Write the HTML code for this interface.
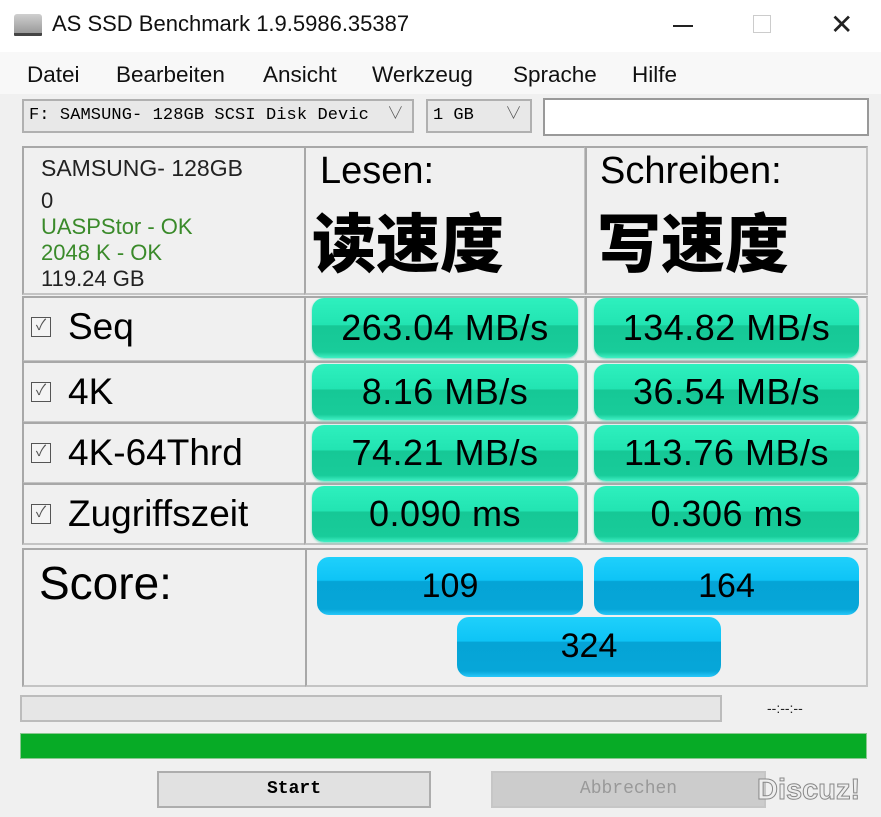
<!DOCTYPE html>
<html><head><meta charset="utf-8"><style>
*{box-sizing:border-box;margin:0;padding:0}
body{width:881px;height:817px;background:#f0f0f0;position:relative;overflow:hidden;font-family:"Liberation Sans","Noto Sans CJK SC",sans-serif;color:#000}
.a{position:absolute}
.cell{position:absolute;border:2px solid #c4c4c4;border-top-color:#a8a8a8;border-left-color:#a8a8a8}
.g{position:absolute;border-radius:12px;background:linear-gradient(#2ef0be 0%,#22e4b2 45%,#16c896 46%,#18cc9a 90%,#40f0c4 100%);font-size:36px;letter-spacing:0.5px;text-align:center;line-height:60px;box-shadow:0 1px 2px #6fdcc0}
.b{position:absolute;border-radius:12px;background:linear-gradient(#1fd0fb 0%,#0ec4f6 40%,#05a4d6 42%,#06a6d8 90%,#28c8fa 100%);font-size:34px;text-align:center;line-height:58px}
.lbl{position:absolute;font-size:37px;left:68px}
.cb{position:absolute;left:31px;width:20px;height:20px;border:1.5px solid #555;background:#f4f4f4;font-size:15px;line-height:16px;text-align:center;color:#555}
.mono{font-family:"Liberation Mono","Noto Serif CJK SC",monospace}
</style></head><body>
<div class="a" style="left:0;top:0;width:881px;height:52px;background:#fff"></div>
<div class="a" style="left:14px;top:14px;width:28px;height:22px;background:linear-gradient(#cfcfcf,#9a9a9a);border-radius:3px 3px 1px 1px;border-bottom:3px solid #444"></div>
<div class="a" style="left:52px;top:11px;font-size:22px;color:#111">AS SSD Benchmark 1.9.5986.35387</div>
<div class="a" style="left:673px;top:25px;width:20px;height:1.5px;background:#222"></div>
<div class="a" style="left:753px;top:15px;width:18px;height:18px;border:1.5px solid #ccc"></div>
<div class="a" style="left:830px;top:8px;font-size:28px;color:#222;font-weight:300">✕</div>
<div class="a" style="left:0;top:52px;width:881px;height:42px;background:#f8f8f8"></div>
<div class="a" style="top:62px;left:27px;font-size:22.5px;color:#111">
<span style="position:absolute;left:0">Datei</span><span style="position:absolute;left:89px">Bearbeiten</span><span style="position:absolute;left:236px">Ansicht</span><span style="position:absolute;left:345px">Werkzeug</span><span style="position:absolute;left:486px">Sprache</span><span style="position:absolute;left:605px">Hilfe</span></div>
<div class="a mono" style="left:22px;top:99px;width:392px;height:34px;border:2px solid #b0b0b0;background:#e8e8e8;font-size:17px;line-height:30px;padding-left:5px;letter-spacing:0.1px;white-space:nowrap">F: SAMSUNG- 128GB SCSI Disk Devic <span style="position:absolute;right:8px;color:#555">∨</span></div>
<div class="a mono" style="left:426px;top:99px;width:106px;height:34px;border:2px solid #b0b0b0;background:#e8e8e8;font-size:17px;line-height:30px;padding-left:5px">1 GB <span style="position:absolute;right:8px;color:#555">∨</span></div>
<div class="a" style="left:543px;top:98px;width:326px;height:38px;border:2px solid #999;background:#fff"></div>

<div class="cell" style="left:22px;top:146px;width:284px;height:149px"></div>
<div class="cell" style="left:304px;top:146px;width:282px;height:149px"></div>
<div class="cell" style="left:585px;top:146px;width:283px;height:149px"></div>
<div class="a" style="left:41px;top:154px;font-size:23px;color:#222;line-height:28px">SAMSUNG- 128GB</div>
<div class="a" style="left:41px;top:188px;font-size:22px;line-height:26px;color:#222">0<br><span style="color:#3a8a2a">UASPStor - OK</span><br><span style="color:#3a8a2a">2048 K - OK</span><br>119.24 GB</div>
<div class="a" style="left:320px;top:150px;font-size:38px">Lesen:</div>
<div class="a" style="left:600px;top:150px;font-size:38px">Schreiben:</div>
<div class="a" style="left:312px;top:198px;font-size:64px;font-weight:900;font-family:'Noto Sans CJK SC',sans-serif;line-height:84px">读速度</div>
<div class="a" style="left:597px;top:198px;font-size:64px;font-weight:900;font-family:'Noto Sans CJK SC',sans-serif;line-height:84px">写速度</div>

<div class="cell" style="left:22px;top:296px;width:284px;height:66px"></div>
<div class="cell" style="left:304px;top:296px;width:282px;height:66px"></div>
<div class="cell" style="left:585px;top:296px;width:283px;height:66px"></div>
<div class="cell" style="left:22px;top:361px;width:284px;height:62px"></div>
<div class="cell" style="left:304px;top:361px;width:282px;height:62px"></div>
<div class="cell" style="left:585px;top:361px;width:283px;height:62px"></div>
<div class="cell" style="left:22px;top:422px;width:284px;height:62px"></div>
<div class="cell" style="left:304px;top:422px;width:282px;height:62px"></div>
<div class="cell" style="left:585px;top:422px;width:283px;height:62px"></div>
<div class="cell" style="left:22px;top:483px;width:284px;height:62px"></div>
<div class="cell" style="left:304px;top:483px;width:282px;height:62px"></div>
<div class="cell" style="left:585px;top:483px;width:283px;height:62px"></div>

<div class="cb" style="top:317px">✓</div><div class="lbl" style="top:306px">Seq</div>
<div class="cb" style="top:382px">✓</div><div class="lbl" style="top:371px">4K</div>
<div class="cb" style="top:443px">✓</div><div class="lbl" style="top:432px">4K-64Thrd</div>
<div class="cb" style="top:504px">✓</div><div class="lbl" style="top:493px">Zugriffszeit</div>

<div class="g" style="left:312px;top:298px;width:266px;height:60px">263.04 MB/s</div>
<div class="g" style="left:594px;top:298px;width:265px;height:60px">134.82 MB/s</div>
<div class="g" style="left:312px;top:364px;width:266px;height:56px;line-height:56px">8.16 MB/s</div>
<div class="g" style="left:594px;top:364px;width:265px;height:56px;line-height:56px">36.54 MB/s</div>
<div class="g" style="left:312px;top:425px;width:266px;height:56px;line-height:56px">74.21 MB/s</div>
<div class="g" style="left:594px;top:425px;width:265px;height:56px;line-height:56px">113.76 MB/s</div>
<div class="g" style="left:312px;top:486px;width:266px;height:56px;line-height:56px">0.090 ms</div>
<div class="g" style="left:594px;top:486px;width:265px;height:56px;line-height:56px">0.306 ms</div>

<div class="cell" style="left:22px;top:548px;width:285px;height:139px"></div>
<div class="cell" style="left:305px;top:548px;width:563px;height:139px"></div>
<div class="a" style="left:39px;top:556px;font-size:46px">Score:</div>
<div class="b" style="left:317px;top:557px;width:266px;height:58px">109</div>
<div class="b" style="left:594px;top:557px;width:265px;height:58px">164</div>
<div class="b" style="left:457px;top:617px;width:264px;height:60px">324</div>

<div class="a" style="left:20px;top:695px;width:702px;height:27px;border:2px solid #bcbcbc;background:#e6e6e6"></div>
<div class="a" style="left:767px;top:700px;font-size:14px;color:#222">--:--:--</div>
<div class="a" style="left:20px;top:733px;width:847px;height:26px;border:1px solid #8ac890;background:#07ab26"></div>
<div class="a mono" style="left:157px;top:771px;width:274px;height:37px;border:2px solid #adadad;background:#e1e1e1;font-size:18px;line-height:33px;text-align:center;font-weight:bold">Start</div>
<div class="a mono" style="left:491px;top:771px;width:275px;height:37px;border:2px solid #c6c6c6;background:#cccccc;font-size:18px;line-height:33px;text-align:center;color:#999">Abbrechen</div>
<div class="a" style="left:757px;top:774px;font-size:29px;font-weight:bold;color:#eee;-webkit-text-stroke:1px #888">Discuz!</div>
</body></html>
